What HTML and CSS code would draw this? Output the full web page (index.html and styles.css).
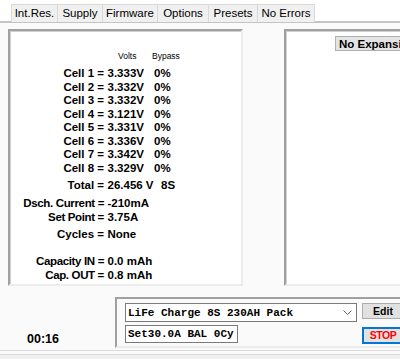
FILE: index.html
```html
<!DOCTYPE html>
<html>
<head>
<meta charset="utf-8">
<link rel="stylesheet" href="styles.css">
</head>
<body>
<div class="tabs">
  <div class="tab-lead"></div>
  <div class="tab t1">Int.Res.</div>
  <div class="tab t2">Supply</div>
  <div class="tab t3">Firmware</div>
  <div class="tab t4">Options</div>
  <div class="tab t5">Presets</div>
  <div class="tab t6">No Errors</div>
</div>
<div class="page">
  <div class="panels">
    <div class="panel left">
      <div class="row head"><span class="lbl"></span><span class="val hv">Volts</span><span class="ext hb">Bypass</span></div>
      <div class="cells">
        <div class="row"><span class="lbl">Cell 1 =</span><span class="val">3.333V</span><span class="ext">0%</span></div>
        <div class="row"><span class="lbl">Cell 2 =</span><span class="val">3.332V</span><span class="ext">0%</span></div>
        <div class="row"><span class="lbl">Cell 3 =</span><span class="val">3.332V</span><span class="ext">0%</span></div>
        <div class="row"><span class="lbl">Cell 4 =</span><span class="val">3.121V</span><span class="ext">0%</span></div>
        <div class="row"><span class="lbl">Cell 5 =</span><span class="val">3.331V</span><span class="ext">0%</span></div>
        <div class="row"><span class="lbl">Cell 6 =</span><span class="val">3.336V</span><span class="ext">0%</span></div>
        <div class="row"><span class="lbl">Cell 7 =</span><span class="val">3.342V</span><span class="ext">0%</span></div>
        <div class="row"><span class="lbl">Cell 8 =</span><span class="val">3.329V</span><span class="ext">0%</span></div>
      </div>
      <div class="row total"><span class="lbl">Total =</span><span class="val">26.456 V</span><span class="ext s8">8S</span></div>
      <div class="row dsch"><span class="lbl tight">Dsch. Current =</span><span class="val wide">-210mA</span></div>
      <div class="row setp"><span class="lbl tight">Set Point =</span><span class="val wide">3.75A</span></div>
      <div class="row cyc"><span class="lbl">Cycles =</span><span class="val wide">None</span></div>
      <div class="row capin"><span class="lbl tight">Capacity IN =</span><span class="val wide">0.0 mAh</span></div>
      <div class="row capout"><span class="lbl tight">Cap. OUT =</span><span class="val wide">0.8 mAh</span></div>
    </div>
    <div class="panel right">
      <div class="exp-head">No Expansion</div>
    </div>
  </div>
  <div class="bottom">
    <div class="timer">00:16</div>
    <div class="group">
      <div class="combo">
        <span class="mono">LiFe Charge 8S 230AH Pack</span>
        <svg class="chev" width="9" height="6" viewBox="0 0 9 6"><polyline points="0.5,0.5 4.5,4.5 8.5,0.5" fill="none" stroke="#606060" stroke-width="1"/></svg>
      </div>
      <div class="btn">Edit</div>
      <div class="tbox"><span class="mono">Set30.0A BAL 0Cy</span></div>
      <div class="btn stop">STOP</div>
    </div>
  </div>
</div>
<div class="footer"></div>
</body>
</html>
```

FILE: styles.css
```css
html, body {
  margin: 0;
  padding: 0;
}
body {
  width: 400px;
  height: 359px;
  overflow: hidden;
  background: #f9f9f9;
  font-family: "Liberation Sans", Arial, sans-serif;
  color: #000;
}
.tabs {
  display: flex;
  height: 21px;
  background: #ffffff;
  border-bottom: 2px solid #c4c4c4;
  box-sizing: content-box;
}
.tab-lead {
  width: 11px;
}
.tab {
  margin-top: 4px;
  height: 17px;
  line-height: 17px;
  font-size: 11.5px;
  background: #f0f0f0;
  border: 1px solid #d9d9d9;
  border-bottom: none;
  margin-right: -1px;
  text-align: center;
  box-sizing: content-box;
  white-space: nowrap;
}
.t1 { width: 45px; }
.t2 { width: 44px; }
.t3 { width: 54px; }
.t4 { width: 50px; }
.t5 { width: 48px; }
.t6 { width: 56px; }

.page {
  height: 327px;
  overflow: hidden;
  background: #fafafa;
}
.panels {
  display: flex;
  margin-top: 6px;
  margin-left: 8px;
  gap: 41px;
}
.panel {
  height: 257px;
  flex-shrink: 0;
  box-sizing: border-box;
  background: #ffffff;
  border-style: solid;
  border-width: 2px;
  border-color: #a0a0a0 #ececec #ececec #a0a0a0;
  box-shadow: inset 1px 1px 0 #d0d0d0;
}
.left {
  width: 235px;
  padding-top: 19.5px;
  font-weight: bold;
  font-size: 11.5px;
}
.right {
  width: 160px;
  padding-top: 5px;
  padding-left: 49px;
}
.row {
  display: flex;
  height: 13.5px;
  line-height: 13.5px;
  white-space: nowrap;
}
.lbl {
  width: 94px;
  text-align: right;
  flex-shrink: 0;
}
.lbl.tight {
  letter-spacing: -0.35px;
}
.val {
  margin-left: 3.5px;
  width: 46.5px;
  flex-shrink: 0;
}
.val.wide {
  width: auto;
}
.head {
  height: 11px;
  line-height: 11px;
  font-weight: normal;
  font-size: 8.5px;
}
.hv {
  padding-left: 10.5px;
  box-sizing: border-box;
}
.hb {
  margin-left: -2px;
}
.cells {
  margin-top: 5.5px;
}
.s8 {
  margin-left: 7px;
}
.total { margin-top: 4.3px; }
.dsch { margin-top: 3.8px; }
.setp { margin-top: 0.9px; }
.cyc { margin-top: 3.1px; }
.capin { margin-top: 13.9px; }
.capout { margin-top: 0.8px; }

.exp-head {
  height: 15px;
  line-height: 14px;
  box-sizing: border-box;
  background: #e4e4e4;
  border: 1px solid #b0b0b0;
  border-right: none;
  padding-left: 3px;
  font-weight: bold;
  font-size: 11.5px;
  white-space: nowrap;
  overflow: hidden;
}

.bottom {
  display: flex;
  margin-top: 11px;
}
.timer {
  width: 88px;
  flex-shrink: 0;
  margin-left: 27px;
  margin-top: 35px;
  line-height: 14px;
  height: 14px;
  font-weight: bold;
  font-size: 12.5px;
}
.group {
  width: 300px;
  height: 51px;
  flex-shrink: 0;
  box-sizing: border-box;
  border-style: solid;
  border-width: 2px;
  border-color: #a0a0a0 #ececec #ececec #a0a0a0;
  padding: 4px 0 0 8px;
  display: grid;
  grid-template-columns: 232px 42px;
  grid-template-rows: 19px 19px;
  column-gap: 5px;
  row-gap: 3px;
  align-items: start;
}
.mono {
  font-family: "Liberation Mono", "Courier New", monospace;
  font-weight: bold;
  font-size: 11px;
}
.combo {
  height: 19px;
  box-sizing: border-box;
  border: 1px solid #7a7a7a;
  background: #ffffff;
  display: flex;
  align-items: center;
  justify-content: space-between;
  padding: 0 4px 0 2px;
}
.chev {
  display: block;
  margin-top: 1px;
}
.tbox {
  width: 113px;
  height: 18px;
  box-sizing: border-box;
  border: 1px solid #7a7a7a;
  background: #ffffff;
  display: flex;
  align-items: center;
  padding-left: 2px;
}
.btn {
  height: 16px;
  box-sizing: border-box;
  background: #e1e1e1;
  border: 1px solid #adadad;
  font-weight: bold;
  font-size: 10.5px;
  line-height: 14px;
  text-align: center;
}
.stop {
  margin-top: 2px;
  height: 17px;
  line-height: 13px;
  border: 2px solid #0078d7;
  color: #ff0000;
  letter-spacing: -0.5px;
}
.footer {
  height: 9px;
  background: #f0f0f0;
  border-top: 1px solid #dcdcdc;
  box-shadow: inset 0 3px 0 #fafafa, inset 0 4px 0 #dcdcdc;
}
```
